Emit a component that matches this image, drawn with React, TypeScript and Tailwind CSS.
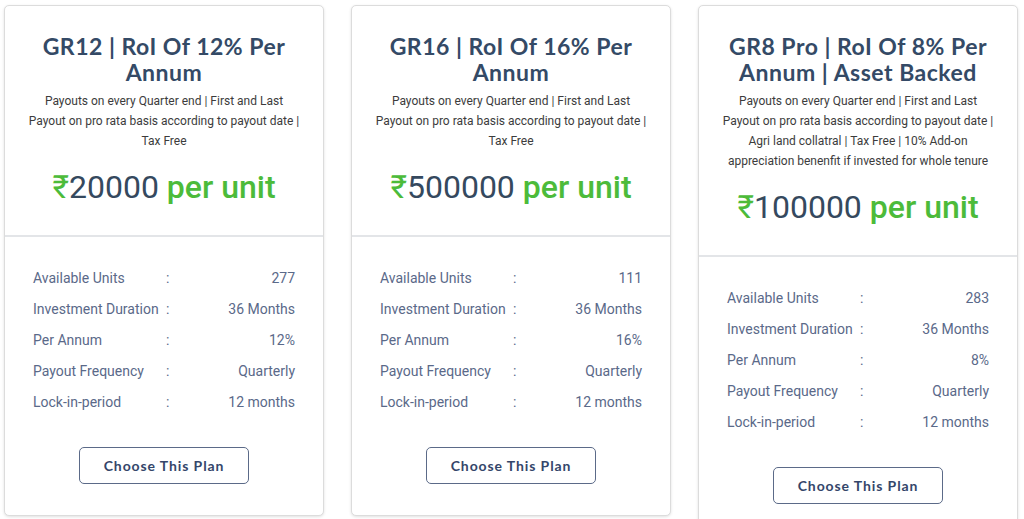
import React from "react";

type Plan = {
  title: string;
  desc: string;
  price: string;
  units: string;
  pa: string;
};

const plans: Plan[] = [
  {
    title: "GR12 | RoI Of 12% Per Annum",
    desc: "Payouts on every Quarter end | First and Last Payout on pro rata basis according to payout date | Tax Free",
    price: "20000",
    units: "277",
    pa: "12%",
  },
  {
    title: "GR16 | RoI Of 16% Per Annum",
    desc: "Payouts on every Quarter end | First and Last Payout on pro rata basis according to payout date | Tax Free",
    price: "500000",
    units: "111",
    pa: "16%",
  },
  {
    title: "GR8 Pro | RoI Of 8% Per Annum | Asset Backed",
    desc: "Payouts on every Quarter end | First and Last Payout on pro rata basis according to payout date | Agri land collatral | Tax Free | 10% Add-on appreciation benenfit if invested for whole tenure",
    price: "100000",
    units: "283",
    pa: "8%",
  },
];

function Card({ p }: { p: Plan }) {
  const rows: [string, string][] = [
    ["Available Units", p.units],
    ["Investment Duration", "36 Months"],
    ["Per Annum", p.pa],
    ["Payout Frequency", "Quarterly"],
    ["Lock-in-period", "12 months"],
  ];
  return (
    <div className="w-[320px] shrink-0 bg-white border border-[#dcdcdc] rounded-[5px] shadow-[0_1px_3px_rgba(0,0,0,0.12)]">
      <div className="px-[22px] pt-[27px] pb-[28px] border-b-2 border-[#e3e5e8] text-center">
        <h2 className="font-['Lato',sans-serif] font-bold text-[23px] leading-[26px] tracking-[0.5px] text-[#344a66]">
          {p.title}
        </h2>
        <p className="mt-[6px] font-['Roboto',sans-serif] text-[12px] leading-[20px] text-[#3c3c3c]">
          {p.desc}
        </p>
        <div className="mt-[16px] font-['Roboto',sans-serif] text-[32px] leading-[40px]">
          <span className="text-[#4cbb3a]">₹</span>
          <span className="text-[#35495e]">{p.price}</span>{" "}
          <span className="text-[#4cbb3a] font-medium">per unit</span>
        </div>
      </div>
      <div className="px-[28px] pt-[26px] pb-[31px]">
        <div className="grid grid-cols-[133px_8px_1fr] font-['Roboto',sans-serif] text-[14px] leading-[31px] text-[#5a6989]">
          {rows.map(([k, v]) => (
            <React.Fragment key={k}>
              <div className="whitespace-nowrap">{k}</div>
              <div>:</div>
              <div className="text-right">{v}</div>
            </React.Fragment>
          ))}
        </div>
        <div className="mt-[29px] flex justify-center">
          <button className="w-[170px] h-[37px] border-[1.5px] border-[#5b6a88] rounded-[5px] font-['Lato',sans-serif] font-bold text-[14px] tracking-[0.9px] text-[#34466a] bg-white">
            Choose This Plan
          </button>
        </div>
      </div>
    </div>
  );
}

export default function App() {
  return (
    <div className="w-[1024px] h-[519px] overflow-hidden bg-white">
      <div className="flex items-start gap-[27px] pl-[4px] pt-[5px]">
        {plans.map((p) => (
          <Card key={p.title} p={p} />
        ))}
      </div>
    </div>
  );
}
